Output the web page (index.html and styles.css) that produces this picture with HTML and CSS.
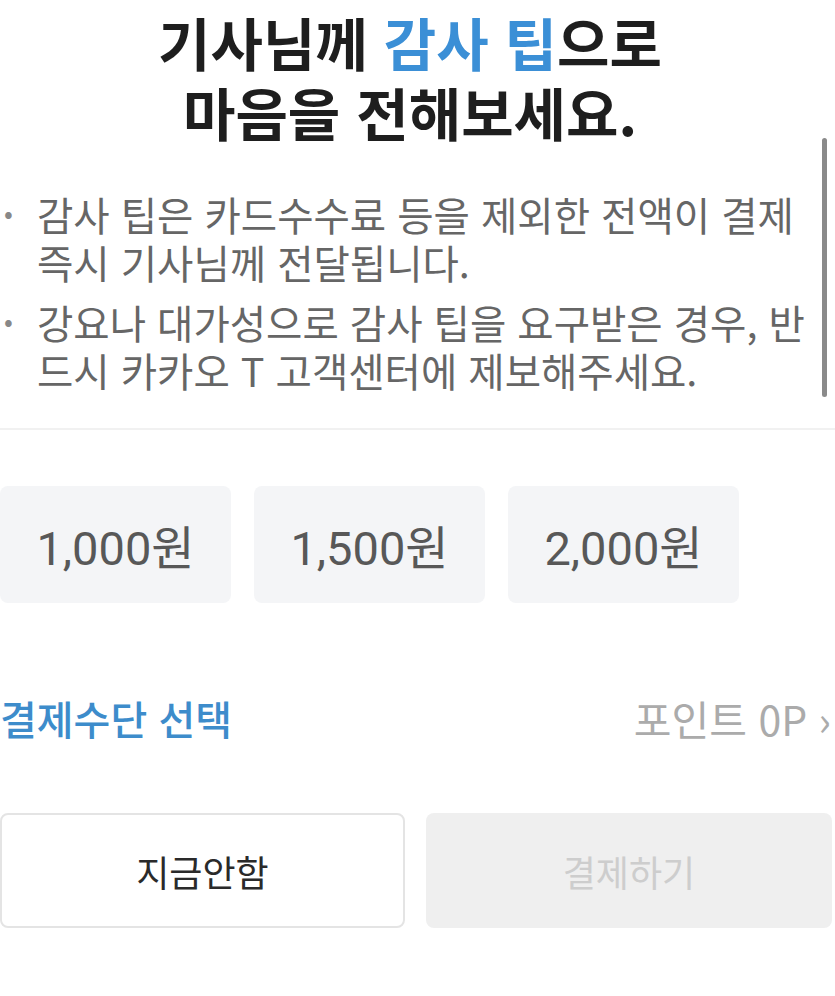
FILE: index.html
```html
<!DOCTYPE html>
<html lang="ko">
<head>
    <meta charset="UTF-8">
    <meta name="viewport" content="width=device-width, initial-scale=1.0">
    <title>감사 팁</title>
    <link rel="stylesheet" href="styles.css">
</head>
<body>
    <div class="sheet">
        <div class="tip-info">
            <h1 class="title">기사님께 <span class="accent">감사 팁</span>으로<br>마음을 전해보세요.</h1>
            <ul class="notice">
                <li>감사 팁은 카드수수료 등을 제외한 전액이 결제 즉시 기사님께 전달됩니다.</li>
                <li>강요나 대가성으로 감사 팁을 요구받은 경우, 반드시 카카오 T 고객센터에 제보해주세요.</li>
            </ul>
            <div class="scrollbar"></div>
        </div>

        <div class="amounts">
            <button class="amount">1,000원</button>
            <button class="amount">1,500원</button>
            <button class="amount">2,000원</button>
        </div>

        <div class="pay-row">
            <span class="pay-label">결제수단 선택</span>
            <span class="points">포인트 0P ›</span>
        </div>

        <div class="actions">
            <button class="btn btn-skip">지금안함</button>
            <button class="btn btn-pay" disabled>결제하기</button>
        </div>
    </div>
</body>
</html>
```

FILE: styles.css
```css
body {
    margin: 0;
    background: #fff;
    font-family: "Noto Sans CJK KR", "Noto Sans", sans-serif;
    color: #222;
}
.sheet {
    width: 835px;
}
.tip-info {
    position: relative;
    padding: 6px 15px 34px 0;
    border-bottom: 2px solid #f1f1f1;
}
.title {
    margin: 0;
    text-align: center;
    font-size: 57px;
    font-weight: 700;
    line-height: 70px;
    color: #1e1e1e;
}
.accent {
    color: #3b8fd6;
}
.notice {
    list-style: none;
    margin: 44px 0 0;
    padding: 0;
}
.notice li {
    position: relative;
    padding-left: 37px;
    padding-right: 12px;
    font-size: 39.5px;
    line-height: 48px;
    color: #666;
    margin-bottom: 12px;
    word-break: break-all;
}
.notice li:last-child {
    margin-bottom: 0;
}
.notice li::before {
    content: "•";
    position: absolute;
    left: 4px;
    top: -2px;
    font-size: 26px;
    color: #888;
}
.scrollbar {
    position: absolute;
    right: 8px;
    top: 138px;
    width: 5px;
    height: 259px;
    border-radius: 3px;
    background: #8a8a8a;
}
.amounts {
    display: flex;
    gap: 23px;
    margin-top: 56px;
}
.amount {
    width: 231px;
    height: 117px;
    border: none;
    border-radius: 8px;
    background: #f4f5f7;
    font-family: Roboto, "Noto Sans CJK KR", sans-serif;
    font-size: 47px;
    color: #585858;
    padding: 0;
}
.pay-row {
    display: flex;
    justify-content: space-between;
    align-items: center;
    margin-top: 90px;
    height: 50px;
}
.pay-label {
    font-size: 40px;
    font-weight: 500;
    color: #3d8ccb;
}
.points {
    font-size: 41px;
    color: #ababab;
    padding-right: 4px;
}
.actions {
    display: grid;
    grid-template-columns: 405px 406px;
    gap: 21px;
    margin-top: 70px;
}
.btn {
    height: 115px;
    border-radius: 8px;
    font-family: "Noto Sans CJK KR", sans-serif;
    font-size: 36px;
    padding: 0;
}
.btn-skip {
    background: #fff;
    border: 2px solid #e4e4e4;
    color: #2a2a2a;
}
.btn-pay {
    background: #efefef;
    border: none;
    color: #cdcdcd;
}
```
